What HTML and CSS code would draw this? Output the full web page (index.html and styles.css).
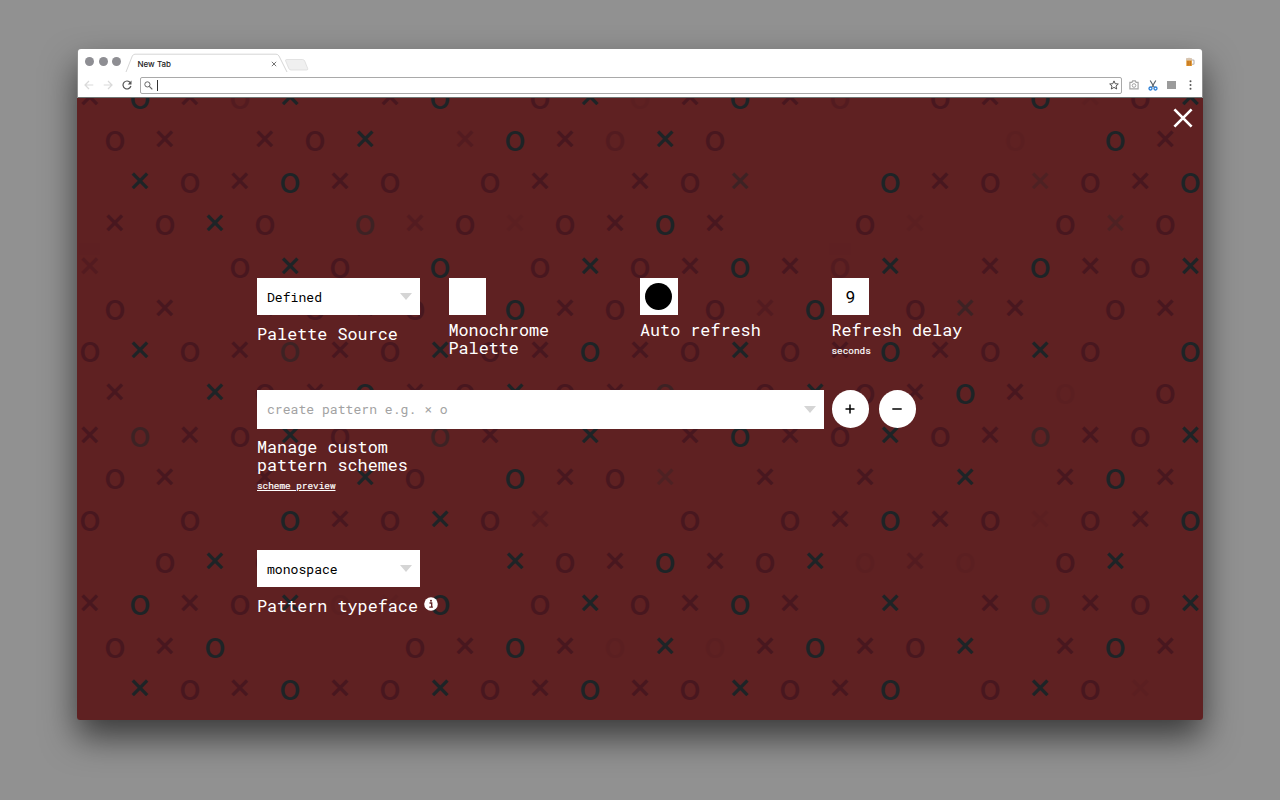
FILE: index.html
```html
<!DOCTYPE html>
<html lang="en">
<head>
<meta charset="utf-8">
<title>New Tab</title>
<link rel="stylesheet" href="styles.css">
</head>
<body>
<div class="window">
  <header class="chrome">
    <div class="tabstrip">
      <div class="lights"><i></i><i></i><i></i></div>
      <div class="tab">
        <svg class="tab-shape" width="166" height="24" viewBox="0 0 166 24"><path d="M2 23 L8.300 7 Q9.300 5.200 11 5.200 H152 Q154 5.200 155 7 L163 23" fill="#fff" stroke="#d6d6d6" stroke-width="1"/></svg>
        <span class="tab-title">New Tab</span>
        <svg class="tab-close" width="6" height="6" viewBox="0 0 6 6"><path d="M.8.800 5.200 5.200M5.200.8.800 5.200" stroke="#666" stroke-width=".9"/></svg>
      </div>
      <svg class="newtab" width="24" height="12" viewBox="0 0 24 12"><path d="M1.500.5H17.500Q19 .5 19.700 2L22.700 9.500Q23.200 11 21.500 11H6Q4.500 11 3.800 9.500L.7 2Q.3.500 1.500.5Z" fill="#f0f0f0" stroke="#dcdcdc" stroke-width=".8"/></svg>
      <svg class="beer" width="10" height="10" viewBox="0 0 10 10"><path d="M6.500 3h1.700q.8 0 .8.800v2.700q0 .8-.8.800H6.500" fill="none" stroke="#b9b2ad" stroke-width="1.100"/><path d="M1.300 2.500h5.600v6.500H1.300z" fill="#e2972d"/><path d="M3 4v4.500M5.200 4v4.500" stroke="#a85c1c" stroke-width=".8"/><path d="M1 1.300q3-1.300 6 0v2.200H1z" fill="#d8c5b0"/></svg>
    </div>
    <div class="toolbar">
      <svg class="nav" width="10" height="10" viewBox="0 0 10 10"><path d="M9.300 5H1M5 1 1 5l4 4" fill="none" stroke="#d9d9d9" stroke-width="1.200"/></svg>
      <svg class="nav" width="10" height="10" viewBox="0 0 10 10"><path d="M.7 5H9M5 1l4 4-4 4" fill="none" stroke="#d9d9d9" stroke-width="1.200"/></svg>
      <svg class="nav" width="10" height="10" viewBox="0 0 10 10"><path d="M8.300 2.700A4 4 0 1 0 8.900 6" fill="none" stroke="#555" stroke-width="1.200"/><path d="M9.500.6V4.400H5.700z" fill="#555"/></svg>
      <div class="omnibox">
        <svg width="9" height="9" viewBox="0 0 9 9"><circle cx="3.400" cy="3.400" r="2.600" fill="none" stroke="#666" stroke-width="1"/><path d="M5.300 5.300 8.300 8.300" stroke="#666" stroke-width="1.200"/></svg>
        <span class="caret"></span>
        <svg class="star" width="10" height="10" viewBox="0 0 10 10"><path d="M5 .9 6.200 3.700l3.100.3L7 6l.7 3L5 7.400 2.300 9 3 6 .7 4l3.100-.3z" fill="none" stroke="#555" stroke-width="1"/></svg>
      </div>
      <svg width="10" height="10" viewBox="0 0 10 10"><path d="M.9 2.300h2L3.700.9h2.600l.8 1.400h2v6.500H.9z" fill="none" stroke="#a5a5a5" stroke-width="1.200"/><circle cx="5" cy="5.500" r="1.800" fill="none" stroke="#a5a5a5"/></svg>
      <svg width="10" height="11" viewBox="0 0 10 11"><path d="M2.200.5 6.200 7.300M7.800.5 3.800 7.300" stroke="#59636b" stroke-width="1.200"/><circle cx="2.500" cy="8.500" r="1.500" fill="none" stroke="#2b7fd6" stroke-width="1.300"/><circle cx="7.500" cy="8.500" r="1.500" fill="none" stroke="#2b7fd6" stroke-width="1.300"/></svg>
      <span class="square"></span>
      <svg class="menu" width="3" height="10" viewBox="0 0 3 10" fill="#555"><circle cx="1.500" cy="1.300" r="1"/><circle cx="1.500" cy="5" r="1"/><circle cx="1.500" cy="8.700" r="1"/></svg>
    </div>
  </header>

  <main class="page">
    <div class="pattern" id="pattern" aria-hidden="true"></div>
    <svg class="close" width="20" height="20" viewBox="0 0 20 20"><path d="M1.400 1.400 18.600 18.600M18.600 1.400 1.400 18.600" stroke="#fff" stroke-width="2.700"/></svg>

    <form class="settings">
      <div class="row options">
        <div class="field">
          <div class="select"><span>Defined</span><i class="arrow"></i></div>
          <div class="label lower">Palette Source</div>
        </div>
        <div class="field">
          <div class="box"></div>
          <div class="label">Monochrome<br>Palette</div>
        </div>
        <div class="field">
          <div class="box"><span class="dot"></span></div>
          <div class="label">Auto refresh</div>
        </div>
        <div class="field">
          <div class="box number">9</div>
          <div class="label">Refresh delay</div>
          <div class="note">seconds</div>
        </div>
      </div>
      <div class="row schemes">
        <div class="combo-line">
          <div class="select combo"><span>create pattern e.g. × o</span><i class="arrow"></i></div>
          <div class="round"><svg width="10" height="10" viewBox="0 0 10 10"><path d="M5 .5v9M.5 5h9" stroke="#000" stroke-width="1.500"/></svg></div>
          <div class="round"><svg width="10" height="10" viewBox="0 0 10 10"><path d="M.3 5h9.400" stroke="#000" stroke-width="1.500"/></svg></div>
        </div>
        <div class="label">Manage custom<br>pattern schemes</div>
        <div class="note link">scheme preview</div>
      </div>
      <div class="row typeface">
        <div class="select"><span>monospace</span><i class="arrow"></i></div>
        <div class="label info-line">Pattern typeface<svg width="14" height="14" viewBox="0 0 14 14"><circle cx="7" cy="7" r="6.800" fill="#fff"/><path d="M5.500 6h2.200v4M5.300 10.200h3.600" fill="none" stroke="#5f2122" stroke-width="1.300"/><circle cx="7" cy="3.700" r="1" fill="#5f2122"/></svg></div>
      </div>
    </form>
  </main>
</div>
<script src="pattern.js"></script>
</body>
</html>
```
FILE: styles.css
```css
* { box-sizing: border-box; }

body {
  margin: 0;
  height: 800px;
  overflow: hidden;
  background: #919191;
  padding: 49px 77px 0;
  font-family: "Roboto Mono", "DejaVu Sans Mono", monospace;
}

svg { display: block; flex: none; }

.window {
  width: 1126px;
  height: 671px;
  border-radius: 4px;
  box-shadow: 0 17px 34px rgba(0, 0, 0, .6);
}

.chrome {
  height: 49px;
  margin: 0 1px;
  background: #fff;
  border-radius: 3px 3px 0 0;
  border-bottom: 1px solid #6f7573;
}

.tabstrip {
  display: flex;
  height: 24px;
  padding: 0 7px 0 7px;
}

.lights { display: flex; gap: 4.500px; padding-top: 8px; width: 39px; }
.lights i { width: 9px; height: 9px; border-radius: 50%; background: #8e8e93; flex: none; }

.tab {
  position: relative;
  width: 161px;
  display: flex;
  align-items: center;
  padding: 5px 8px 0 13.500px;
  justify-content: space-between;
  font: 500 8px/10px Inter, sans-serif;
  color: #222;
}
.tab-shape { position: absolute; left: 0; top: 0; }
.tab-title { position: relative; }
.tab-close { position: relative; }
.newtab { margin: 10px 0 0 0; }
.beer { margin: 8px 0 0 auto; }

.toolbar {
  display: flex;
  align-items: center;
  height: 24px;
  padding: 0 10px 0 6px;
  gap: 9px;
}

.omnibox {
  flex: 1;
  display: flex;
  align-items: center;
  height: 17px;
  margin-left: -1.500px;
  margin-right: -1.500px;
  padding: 0 2px 0 3px;
  border: 1px solid #a9a9a9;
  border-radius: 2px;
}
.caret { width: 1px; height: 11px; margin-left: 4px; background: #333; }
.star { margin-left: auto; }
.square { width: 9px; height: 8px; background: #9b9b9b; }
.menu { margin-left: 4px; }

.page {
  position: relative;
  height: 622px;
  overflow: hidden;
  background: #5f2122;
  border-radius: 0 0 3px 3px;
}

.pattern {
  position: absolute;
  top: -23.200px;
  left: -12.200px;
  font: 400 37.500px/42.230px Roboto, sans-serif;
  -webkit-text-stroke-width: .15px;
}
.pattern-row { display: flex; height: 42.230px; }
.pattern-row:nth-child(even) { padding-left: 25px; }
.glyph { width: 50.030px; flex: none; text-align: center; }
.dark { color: #1d2427; }
.wine { color: #48171f; }
.faded { opacity: .5; }
.faint { opacity: .25; }
.wine.faint { opacity: .15; }

.close { position: absolute; top: 10px; right: 10px; }

.settings { position: relative; width: 770px; padding: 180px 0 0 180px; color: #fff; }

.options {
  display: grid;
  grid-template-columns: repeat(4, 191.500px);
  height: 112px;
}

.select {
  display: flex;
  align-items: center;
  justify-content: space-between;
  width: 163px;
  height: 37.400px;
  padding: 0 8px 0 10px;
  background: #fff;
  color: #000;
  font-size: 13.100px;
}
.arrow {
  border: 6.500px solid transparent;
  border-top: 7px solid #d5d5d5;
  border-bottom: 0;
}

.box {
  display: flex;
  align-items: center;
  justify-content: center;
  width: 37.500px;
  height: 37.400px;
  background: #fff;
  color: #000;
}
.dot { width: 27px; height: 27px; border-radius: 50%; background: #000; }
.number { font-size: 17px; }

.label { margin-top: 5.600px; font-size: 16.780px; line-height: 18px; white-space: nowrap; }
.label.lower { margin-top: 9.300px; }
.note { margin-top: 6px; font-size: 9.350px; line-height: 12px; -webkit-text-stroke: .2px #fff; }
.link { text-decoration: underline; }

.schemes { height: 160px; }
.combo-line { display: flex; width: 670px; }
.combo { flex: none; width: 567px; height: 39px; margin-right: 7.500px; padding-bottom: 1px; }
.combo span { color: #a3a3a3; }
.round {
  display: flex;
  align-items: center;
  justify-content: center;
  flex: none;
  width: 37.500px;
  height: 38px;
  margin-right: 9.500px;
  border-radius: 50%;
  background: #fff;
}
.schemes .label { margin-top: 9px; }

.info-line { display: flex; gap: 6px; margin-top: 9.300px; }
```
FILE: pattern.js
```js
// X/O: dark glyphs, Y/Q: dark at half strength, Z: dark and faint.
// x/o: wine glyphs, y/q: wine at half strength, z/p: wine and faint.
const rows = [
  "xOxqX.xO.oXpxOxq.oxOzoX",
  "ox.xoX.yOxqXo.....p.Ox",
  ".XoxOxo.ox.xoY..OxoZoxO",
  "xoXo.QyozoxOx..oz..oZo",
  "y..oXo.O.oXoxOxqX.xOxoX",
  "ox.xoxo.Oxo.oyO.oYx.ox",
  "oXoxQxoXoxOxoXoxOxoXo.O",
  "x.XoxOxoXoxQ.oXoxOxp.o",
  "xQxoXo.Qx.X.xOxoXoxQxoX",
  "ox.x.Xo.OxoZ.x.x.X.xOx",
  "o.o.OxoXoy..o.oxOxozoxO",
  ".oXo....XoxOxoXpyp.oX.",
  "xOxoXpzO.oXoxOx.X.xQxoX",
  "oxO...oxOxpXpxOxoX.xOx",
  ".XoxOxoXoxOxoXoxO.oXoz."
];
const kinds = {
  X: ["×", "dark"], O: ["o", "dark"],
  Y: ["×", "dark faded"], Q: ["o", "dark faded"], Z: ["×", "dark faint"],
  x: ["×", "wine"], o: ["o", "wine"],
  y: ["×", "wine faded"], q: ["o", "wine faded"],
  z: ["×", "wine faint"], p: ["o", "wine faint"],
  ".": ["", ""]
};
const pattern = document.getElementById("pattern");
for (const row of rows) {
  const line = document.createElement("div");
  line.className = "pattern-row";
  for (const key of row) {
    const glyph = document.createElement("span");
    glyph.className = "glyph " + kinds[key][1];
    glyph.textContent = kinds[key][0];
    line.appendChild(glyph);
  }
  pattern.appendChild(line);
}
```
